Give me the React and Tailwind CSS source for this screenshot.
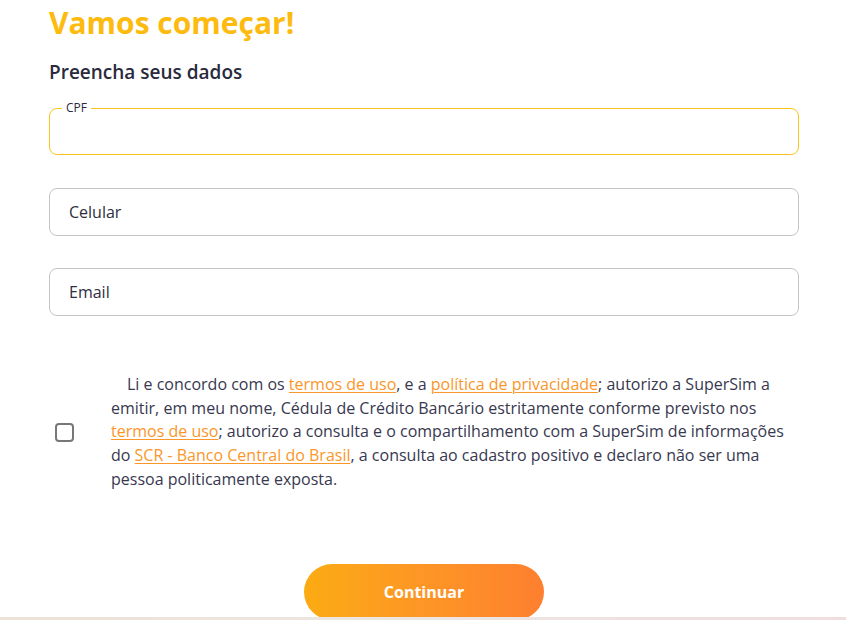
export default function App() {
  const link = "text-[#fb962a] underline decoration-1 underline-offset-2";
  return (
    <div className="w-[846px] h-[620px] bg-white overflow-hidden flex flex-col" style={{ fontFamily: '"Open Sans", sans-serif' }}>
      <div className="flex-1 min-h-0 overflow-hidden pl-[49px] pr-[47px]">
        <h1 className="text-[30px] leading-[38px] font-bold text-[#fdbb0f] mt-[4px]">Vamos começar!</h1>
        <h2 className="text-[19px] leading-[26px] font-semibold text-[#2a2a3c] mt-[17px]">Preencha seus dados</h2>
        <fieldset className="mt-[17px] h-[53px] border border-[#fcc41a] rounded-[8px] px-[12px]">
          <legend className="text-[12px] leading-[12px] text-[#2a2a3c] px-[4px]">CPF</legend>
        </fieldset>
        <div className="mt-[33px] h-[48px] border border-[#c4c4c4] rounded-[8px] flex items-center px-[19px] text-[16px] text-[#2e2e40]">Celular</div>
        <div className="mt-[32px] h-[48px] border border-[#c4c4c4] rounded-[8px] flex items-center px-[19px] text-[16px] text-[#2e2e40]">Email</div>
        <div className="mt-[57px] flex items-center">
          <div className="w-[62px] flex-none pl-[6px]">
            <div className="w-[19px] h-[19px] border-2 border-[#777] rounded-[4px]"></div>
          </div>
          <p className="text-[16px] leading-[23.7px] text-[#38384f] indent-[16px]">
            Li e concordo com os <span className={link}>termos de uso</span>, e a <span className={link}>política de privacidade</span>; autorizo a SuperSim a emitir, em meu nome, Cédula de Crédito Bancário estritamente conforme previsto nos <span className={link}>termos de uso</span>; autorizo a consulta e o compartilhamento com a SuperSim de informações do <span className={link}>SCR - Banco Central do Brasil</span>, a consulta ao cadastro positivo e declaro não ser uma pessoa politicamente exposta.
          </p>
        </div>
        <div className="flex justify-center mt-[72px]">
          <button className="w-[240px] h-[56px] flex-none rounded-full bg-gradient-to-r from-[#fbab12] to-[#fe7f2f] text-white font-bold text-[16px]">Continuar</button>
        </div>
      </div>
      <div className="h-[3px] flex-none bg-gradient-to-r from-[#ece3d9] via-[#ece6e2] to-[#efdedd]"></div>
    </div>
  );
}
